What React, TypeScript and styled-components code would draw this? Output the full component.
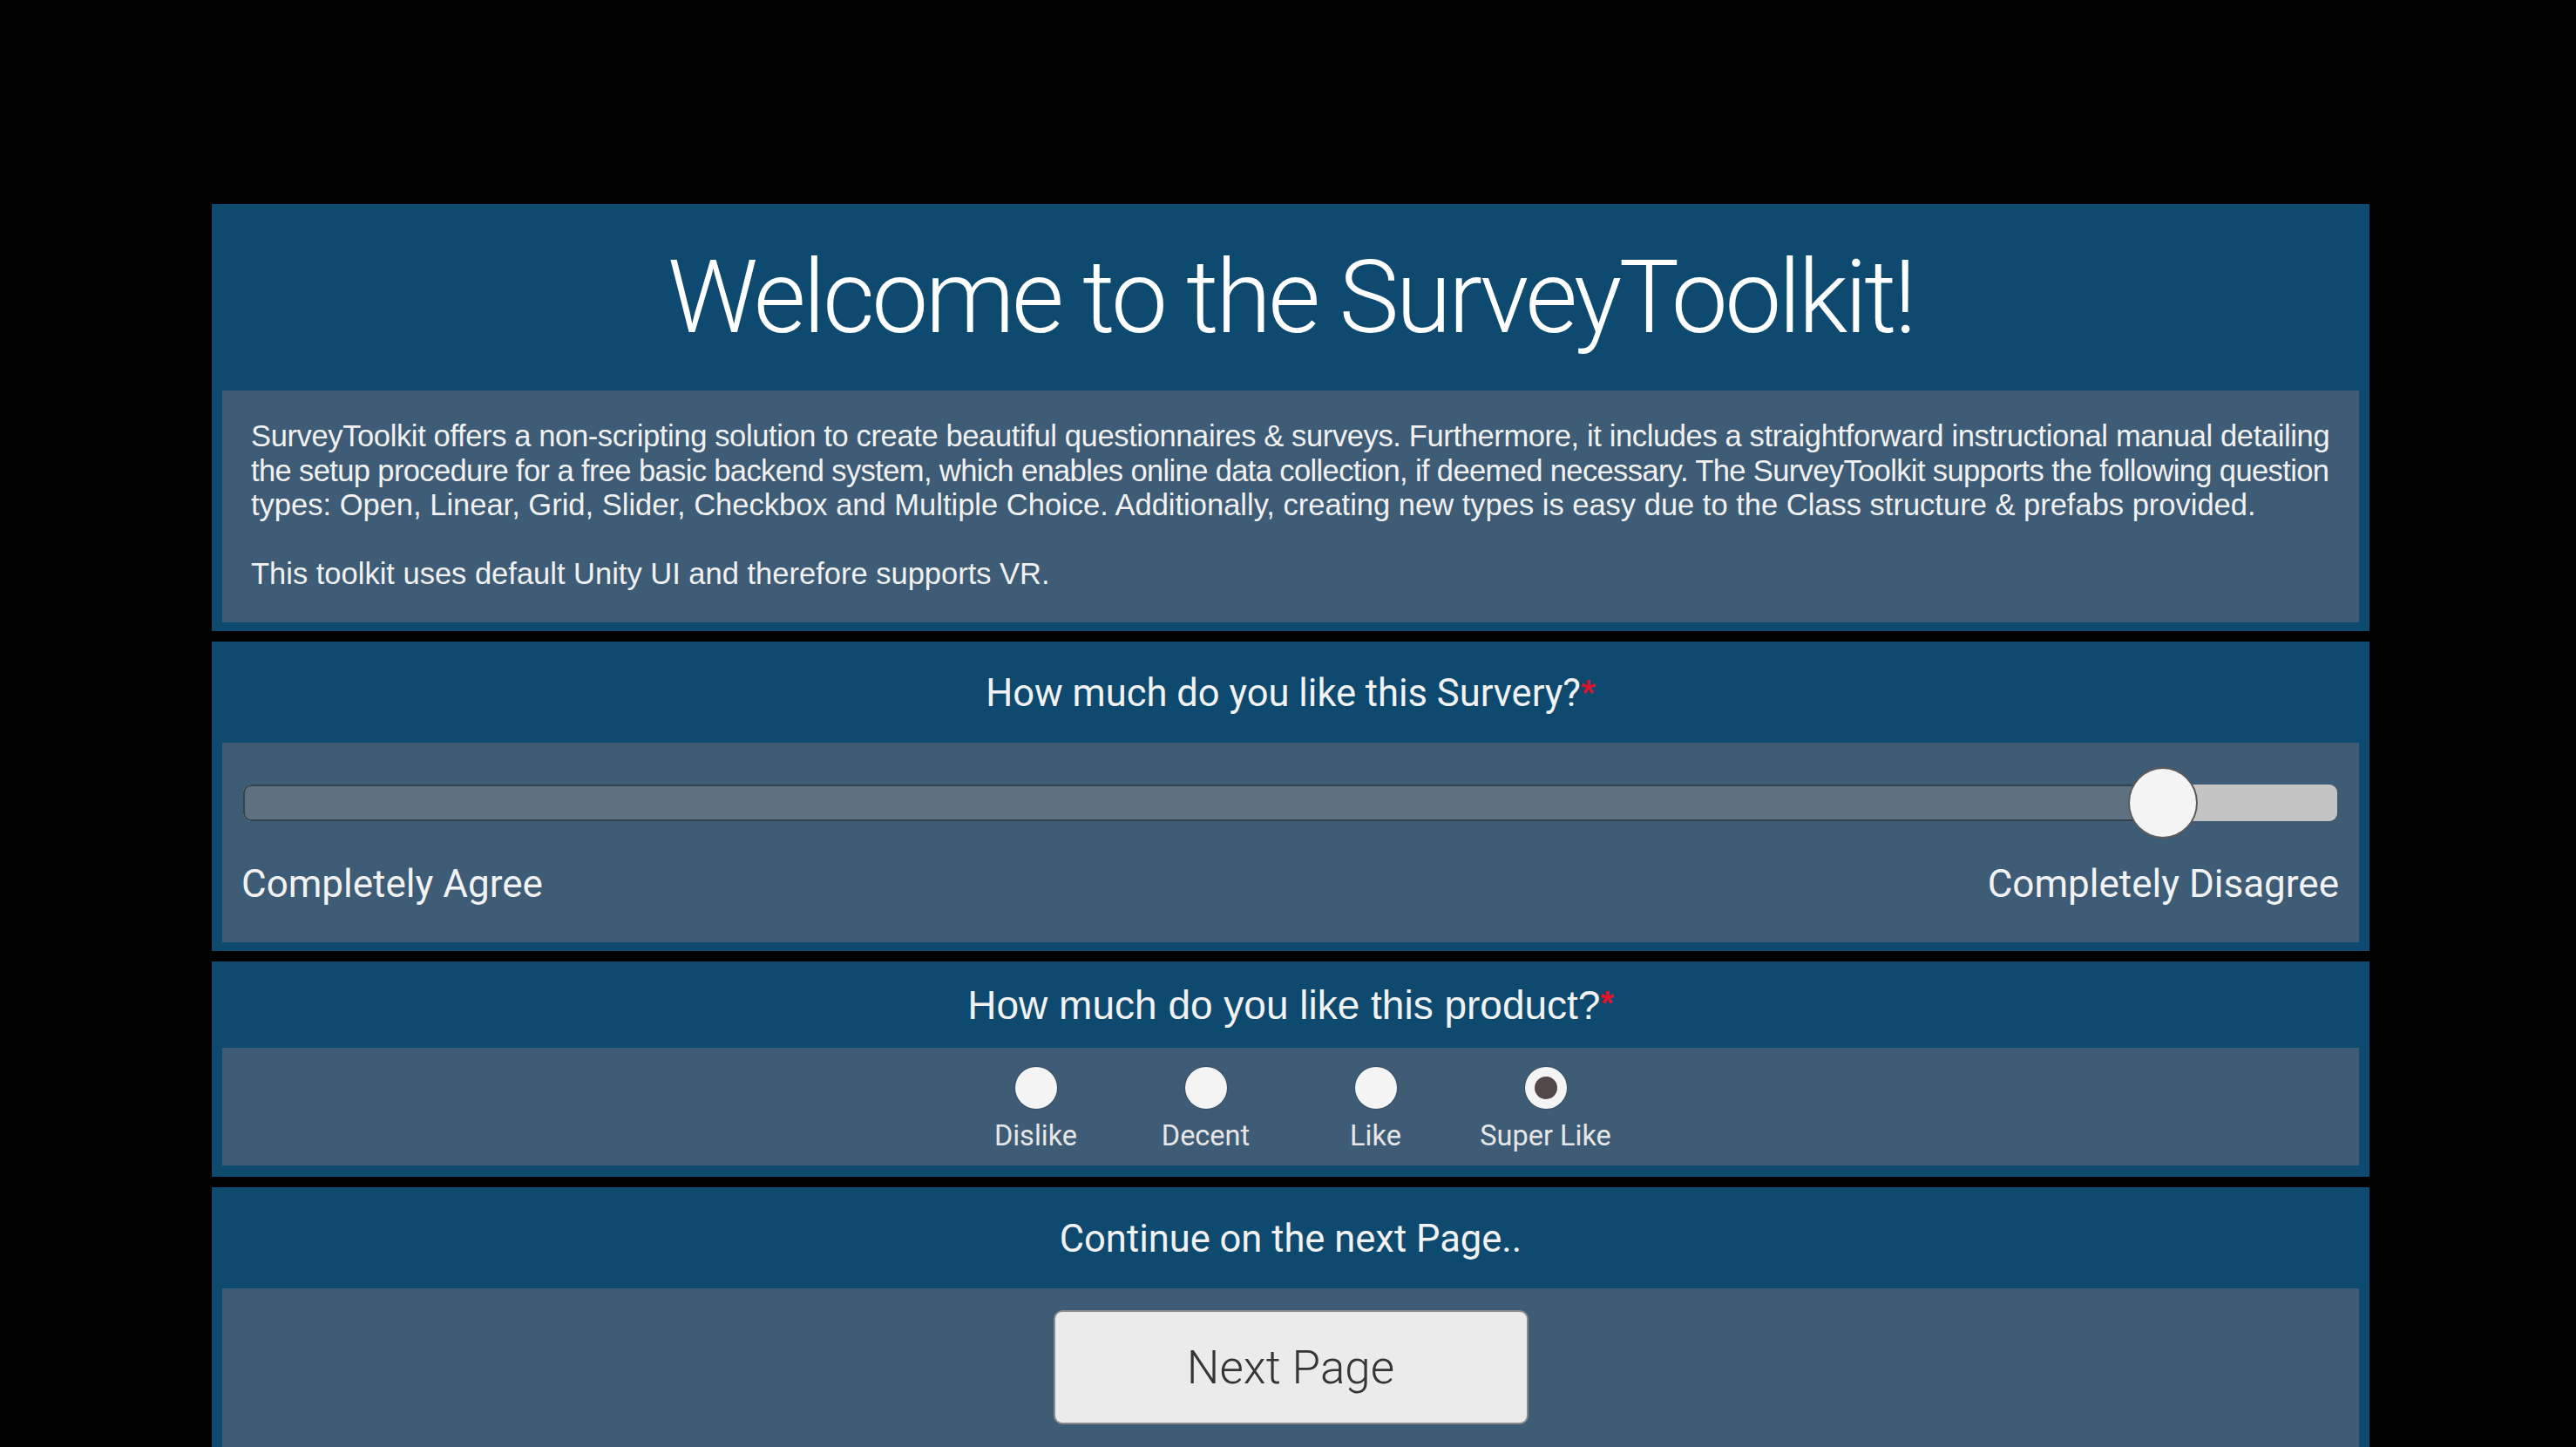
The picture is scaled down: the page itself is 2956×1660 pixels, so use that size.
import React from "react";
import styled, { createGlobalStyle } from "styled-components";

const HEAD_FONT = `"Roboto", "Liberation Sans", sans-serif`;
const BODY_FONT = `"Liberation Sans", Arial, sans-serif`;

const GlobalStyle = createGlobalStyle`
  html, body { margin: 0; padding: 0; background: #000; }
  body { width: 2956px; height: 1660px; overflow: hidden; }
`;

const Page = styled.main`
  box-sizing: border-box;
  width: 2956px;
  height: 1660px;
  padding: 234px 0 0 243px;
  display: flex;
  flex-direction: column;
  gap: 12px;
`;

const Panel = styled.section<{ $pb?: number }>`
  width: 2476px;
  box-sizing: border-box;
  background: #0e4a6f;
  padding: 0 12px ${(p) => p.$pb ?? 10}px;
  display: flex;
  flex-direction: column;
  flex-shrink: 0;
`;

const Header = styled.div<{ $h: number }>`
  height: ${(p) => p.$h}px;
  display: flex;
  align-items: center;
  justify-content: center;
`;

const Title = styled.h1`
  margin: 0;
  font-family: ${HEAD_FONT};
  font-weight: 300;
  font-size: 116px;
  letter-spacing: -3.5px;
  line-height: 1;
  color: #ffffff;
`;

const Question = styled.h2<{ $arial?: boolean }>`
  margin: 0;
  padding-top: ${(p) => (p.$arial ? 0 : 3)}px;
  font-family: ${(p) => (p.$arial ? BODY_FONT : HEAD_FONT)};
  font-weight: 400;
  font-size: ${(p) => (p.$arial ? 46 : 43.5)}px;
  line-height: 1;
  color: #f2f2f2;
`;

const Required = styled.span`
  color: #e3122b;
  font-weight: 700;
  font-size: 0.85em;
  vertical-align: 0.12em;
`;

const Body = styled.div<{ $h: number }>`
  height: ${(p) => p.$h}px;
  box-sizing: border-box;
  background: #3e5c75;
`;

const Description = styled(Body)`
  padding: 33px 33px 0 33px;
  font-family: ${BODY_FONT};
  font-size: 34.5px;
  line-height: 39.5px;
  color: #f1f1f1;
`;

const Line = styled.div<{ $ls?: number; $gapBefore?: boolean }>`
  white-space: nowrap;
  letter-spacing: ${(p) => p.$ls ?? 0}px;
  margin-top: ${(p) => (p.$gapBefore ? "39.5px" : "0")};
`;

const SliderBody = styled(Body)`
  padding: 48px 25px 0 24px;
  display: flex;
  flex-direction: column;
`;

const Track = styled.div`
  position: relative;
  height: 42px;
  border-radius: 9px;
  background: #c4c4c4;
`;

const Fill = styled.div`
  height: 100%;
  box-sizing: border-box;
  background: #5f7080;
  border: 2px solid #36434d;
  border-right: none;
  border-radius: 9px 0 0 9px;
`;

const Handle = styled.div`
  position: absolute;
  top: 50%;
  width: 80px;
  height: 82px;
  margin: -41px 0 0 -40px;
  box-sizing: border-box;
  border-radius: 50%;
  background: #f4f4f4;
  border: 2px solid #5b5b5b;
`;

const ScaleLabels = styled.div`
  margin: 42px -2px 0 -2px;
  display: flex;
  justify-content: space-between;
  font-family: ${HEAD_FONT};
  font-size: 44px;
  line-height: 60px;
  color: #f2f2f2;
`;

const RadioBody = styled(Body)`
  padding-top: 22px;
  display: flex;
  justify-content: center;
`;

const RadioItem = styled.label`
  width: 195px;
  display: flex;
  flex-direction: column;
  align-items: center;
  gap: 11px;
`;

const RadioCircle = styled.span<{ $checked: boolean }>`
  width: 48px;
  height: 48px;
  border-radius: 50%;
  background: #f4f4f4;
  box-shadow: 0 0 0 1px rgba(0, 0, 0, 0.15);
  display: flex;
  align-items: center;
  justify-content: center;
  &::after {
    content: "";
    display: ${(p) => (p.$checked ? "block" : "none")};
    width: 26px;
    height: 26px;
    border-radius: 50%;
    background: #524848;
  }
`;

const RadioLabel = styled.span`
  font-family: ${HEAD_FONT};
  font-size: 32.5px;
  line-height: 40px;
  color: #e6e6e6;
  white-space: nowrap;
`;

const ButtonBody = styled(Body)`
  padding-top: 25px;
  display: flex;
  justify-content: center;
  align-items: flex-start;
`;

const NextButton = styled.button`
  width: 545px;
  height: 131px;
  box-sizing: border-box;
  background: #ebebeb;
  border: 2px solid #8a8a8a;
  border-radius: 10px;
  font-family: ${HEAD_FONT};
  font-weight: 300;
  font-size: 53px;
  color: #353535;
  cursor: pointer;
`;

const descriptionLines = [
  { text: "SurveyToolkit offers a non-scripting solution to create beautiful questionnaires & surveys. Furthermore, it includes a straightforward instructional manual detailing", ls: -0.37 },
  { text: "the setup procedure for a free basic backend system, which enables online data collection, if deemed necessary. The SurveyToolkit supports the following question", ls: -0.62 },
  { text: "types: Open, Linear, Grid, Slider, Checkbox and Multiple Choice. Additionally, creating new types is easy due to the Class structure & prefabs provided.", ls: 0 },
];

const options = ["Dislike", "Decent", "Like", "Super Like"];
const selected = 3;
const sliderValue = 91.68;

export default function App() {
  return (
    <>
      <GlobalStyle />
      <Page>
        <Panel>
          <Header $h={214}>
            <Title>Welcome to the SurveyToolkit!</Title>
          </Header>
          <Description $h={266}>
            {descriptionLines.map((l) => (
              <Line key={l.text} $ls={l.ls}>
                {l.text}
              </Line>
            ))}
            <Line $gapBefore>This toolkit uses default Unity UI and therefore supports VR.</Line>
          </Description>
        </Panel>

        <Panel>
          <Header $h={116}>
            <Question>
              How much do you like this Survery?<Required>*</Required>
            </Question>
          </Header>
          <SliderBody $h={229}>
            <Track>
              <Fill style={{ width: `${sliderValue}%` }} />
              <Handle style={{ left: `${sliderValue}%` }} />
            </Track>
            <ScaleLabels>
              <span>Completely Agree</span>
              <span>Completely Disagree</span>
            </ScaleLabels>
          </SliderBody>
        </Panel>

        <Panel $pb={13}>
          <Header $h={99}>
            <Question $arial>
              How much do you like this product?<Required>*</Required>
            </Question>
          </Header>
          <RadioBody $h={135}>
            {options.map((o, i) => (
              <RadioItem key={o}>
                <RadioCircle $checked={i === selected} />
                <RadioLabel>{o}</RadioLabel>
              </RadioItem>
            ))}
          </RadioBody>
        </Panel>

        <Panel>
          <Header $h={116}>
            <Question>Continue on the next Page..</Question>
          </Header>
          <ButtonBody $h={220}>
            <NextButton>Next Page</NextButton>
          </ButtonBody>
        </Panel>
      </Page>
    </>
  );
}
